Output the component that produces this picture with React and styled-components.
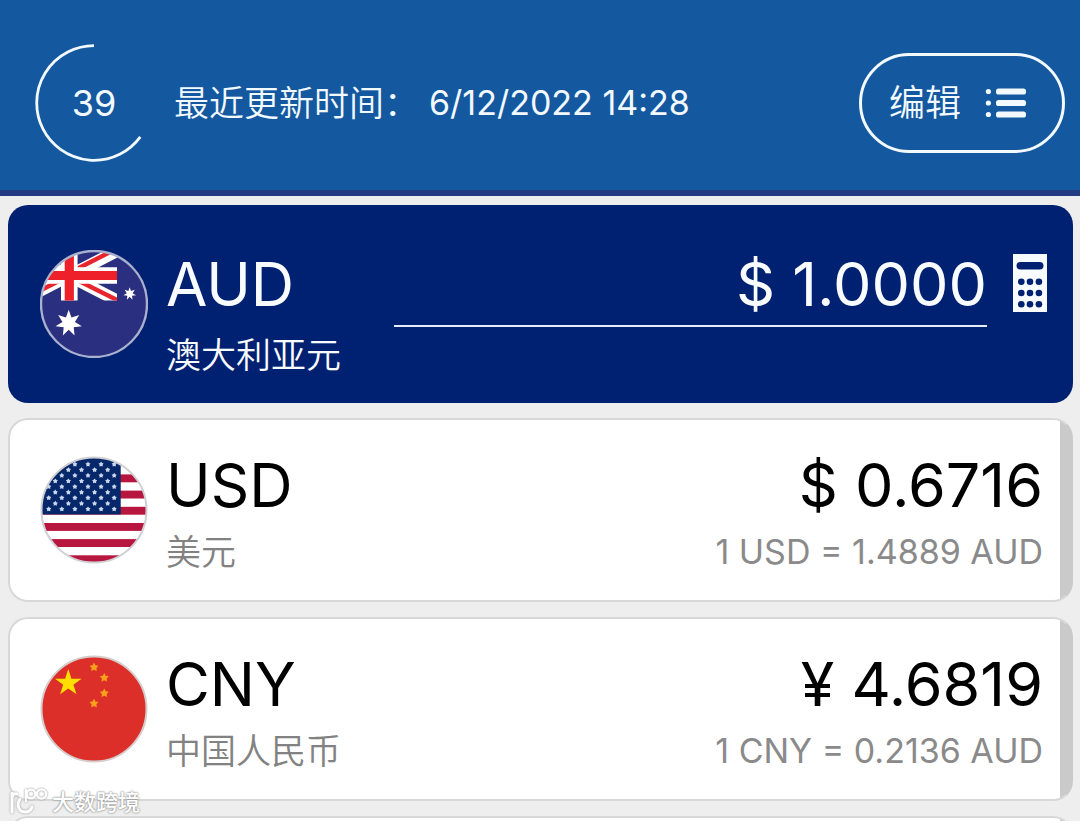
import React from "react";
import styled, { createGlobalStyle } from "styled-components";

const GlobalStyle = createGlobalStyle`
  * { box-sizing: border-box; }
  body {
    margin: 0;
    background: #eeeeee;
    font-family: Inter, "Noto Sans CJK SC", sans-serif;
    color: #000;
  }
  button, input { font: inherit; color: inherit; }
`;

const Screen = styled.div`
  position: relative;
  display: flex;
  flex-direction: column;
  height: 100vh;
  overflow: hidden;
`;

const Header = styled.header`
  flex: none;
  display: flex;
  align-items: center;
  padding: 44px 15px 28px 35px;
  background: #14589f;
  border-bottom: 6px solid #233b82;
  color: #f2f9ff;
`;

const Countdown = styled.div`
  position: relative;
  display: grid;
  place-items: center;
  width: 118px;
  height: 118px;
  font-size: 36px;
  line-height: 44px;
`;

const Ring = styled.svg`
  position: absolute;
  inset: 0;
  width: 100%;
  height: 100%;
`;

const Updated = styled.p`
  display: flex;
  gap: 10px;
  flex: 1;
  margin: 0 0 0 21px;
  font-size: 34px;
  line-height: 48px;
  white-space: nowrap;
`;

const UpdatedLabel = styled.span`
  font-size: 35px;
  font-weight: 350;
`;

const EditButton = styled.button`
  display: flex;
  align-items: center;
  gap: 24px;
  height: 100px;
  padding: 0 35px 0 27px;
  border: 3px solid #f2f9ff;
  border-radius: 50px;
  background: none;
  font-size: 36px;
  font-weight: 350;
  line-height: 48px;
  white-space: nowrap;
`;

const List = styled.main`
  flex: 1;
  min-height: 0;
  display: flex;
  flex-direction: column;
  gap: 15px;
  padding: 9px 7px 0 8px;
  overflow-y: auto;
  scrollbar-width: none;
`;

const Card = styled.section`
  flex: none;
  display: flex;
  gap: 18px;
  height: 184px;
  padding: 0 28px 0 30px;
  border: 2px solid #d8d8d8;
  border-right-color: #cacaca;
  border-radius: 20px;
  background: linear-gradient(to left, #cacaca 11px, #fff 11px);
`;

const BaseCard = styled(Card)`
  height: 198px;
  padding: 0 26px 0 32px;
  border: 0;
  background: #002171;
  color: #f8fbff;
`;

const Flag = styled.svg`
  flex: none;
  align-self: center;
  width: 108px;
  height: 108px;
`;

const Lines = styled.div`
  display: flex;
  flex-direction: column;
  gap: 7px;
  padding-top: 27px;
  white-space: nowrap;
`;

const BaseLines = styled(Lines)`
  flex: 0 0 228px;
  gap: 11px;
  padding-top: 41px;
`;

const Rates = styled(Lines)`
  margin-left: auto;
  text-align: right;
`;

const Code = styled.h2`
  margin: 0;
  font-size: 60px;
  font-weight: 400;
  line-height: 76px;
`;

const Amount = styled.div`
  font-size: 61px;
  line-height: 76px;
`;

const Name = styled.label`
  color: ${(p) => (p.$light ? "inherit" : "#828282")};
  font-size: 35px;
  font-weight: 350;
  line-height: 44px;
`;

const Conversion = styled.div`
  color: #8a8a8a;
  font-size: 34px;
  line-height: 44px;
`;

const AmountInput = styled.input`
  flex: 1;
  min-width: 0;
  height: 82px;
  margin: 40px 8px 0 -18px;
  padding: 0 0 2px;
  border: 0;
  border-bottom: 2px solid #e4ecf8;
  border-radius: 0;
  outline: 0;
  background: none;
  font-size: 61px;
  text-align: right;
`;

const CalculatorButton = styled.button`
  flex: none;
  display: block;
  width: 34px;
  height: 58px;
  margin-top: 49px;
  padding: 0;
  border: 0;
  background: none;
`;

const Watermark = styled.div`
  position: absolute;
  left: 8px;
  bottom: 5px;
  display: flex;
  align-items: flex-end;
  gap: 4px;
  color: #fff;
  font-size: 22px;
  font-weight: 500;
  line-height: 28px;
  text-shadow: 0 0 2px #8a8a8a, 0 0 2px #9a9a9a;
`;

const MarkLogo = styled.svg`
  width: 40px;
  height: 30px;
  filter: drop-shadow(0 0 1px #909090);
`;

function star(cx, cy, outer, inner, points) {
  return Array.from({ length: points * 2 }, (_, i) => {
    const r = i % 2 ? inner : outer;
    const a = (Math.PI * i) / points - Math.PI / 2;
    return `${(cx + r * Math.cos(a)).toFixed(2)},${(cy + r * Math.sin(a)).toFixed(2)}`;
  }).join(" ");
}

function AustraliaFlag() {
  return (
    <Flag viewBox="0 0 108 108" aria-hidden="true">
      <clipPath id="au-round"><circle cx="54" cy="54" r="53" /></clipPath>
      <clipPath id="au-jack"><path d="M0 0H72L77 6V50.5H0Z" /></clipPath>
      <g clipPath="url(#au-round)">
        <rect width="108" height="108" fill="#2b2f7f" />
        <g clipPath="url(#au-jack)">
          <path d="M-19 1 77 50.5M-19 50.5 77 1" stroke="#fff" strokeWidth="12" />
          <path d="M29 26 78 50.5M29 23 78-2M29 26-19 50" stroke="#e8242c" strokeWidth="4.4" />
          <path d="M0 25.5H77M29.3 0V51" stroke="#fff" strokeWidth="16.6" />
          <path d="M0 25.5H77M29.3 0V51" stroke="#ee2029" strokeWidth="9.2" />
        </g>
        <polygon points={star(28.7, 73.3, 13.5, 6.4, 7)} fill="#fff" />
        <polygon points={star(89.7, 43.8, 6.5, 3, 7)} fill="#fff" />
      </g>
      <circle cx="54" cy="54" r="53" fill="none" stroke="#aab1cf" strokeWidth="2.4" />
    </Flag>
  );
}

function UnitedStatesFlag() {
  const stars = [];
  for (let row = 0; row < 9; row++) {
    for (let col = 0; col < (row % 2 ? 5 : 6); col++) {
      stars.push([8.7 + (row % 2 ? 6.6 : 0) + col * 13.1, 8.3 + row * 5.6]);
    }
  }
  return (
    <Flag viewBox="0 0 108 108" aria-hidden="true">
      <clipPath id="us-round"><circle cx="54" cy="54" r="52.5" /></clipPath>
      <g clipPath="url(#us-round)">
        <rect width="108" height="108" fill="#fff" />
        {[2.2, 18.4, 34.6, 50.8, 67, 83.1, 99.3].map((y) => (
          <rect key={y} y={y} width="108" height="7.9" fill="#b7173f" />
        ))}
        <rect width="80.7" height="58.4" fill="#06286b" />
        {stars.map(([x, y]) => (
          <polygon key={`${x}-${y}`} points={star(x, y, 2.7, 1.6, 5)} fill="#c9d8ee" />
        ))}
      </g>
      <circle cx="54" cy="54" r="52.5" fill="none" stroke="#cfcfd4" strokeWidth="2" />
    </Flag>
  );
}

function ChinaFlag() {
  return (
    <Flag viewBox="0 0 108 108" aria-hidden="true">
      <circle cx="54" cy="54" r="52.5" fill="#dc2f29" stroke="#d5cccc" strokeWidth="2" />
      <polygon points={star(28.3, 28, 14, 5.4, 5)} fill="#ffde00" />
      {[[54, 12.2], [64.3, 22.8], [64.3, 38.2], [54, 48.5]].map(([x, y]) => (
        <polygon key={`${x}-${y}`} points={star(x, y, 4.8, 2.5, 5)} fill="#f9a01b" />
      ))}
    </Flag>
  );
}

const rates = [
  { code: "USD", name: "美元", amount: "$ 0.6716", conversion: "1 USD = 1.4889 AUD", FlagIcon: UnitedStatesFlag },
  { code: "CNY", name: "中国人民币", amount: "¥ 4.6819", conversion: "1 CNY = 0.2136 AUD", FlagIcon: ChinaFlag },
];

export default function App() {
  return (
    <Screen>
      <GlobalStyle />
      <Header>
        <Countdown>
          <Ring viewBox="0 0 118 118" aria-hidden="true">
            <path d="M59 1.7A57.3 57.3 0 1 0 105.3 92.8" fill="none" stroke="currentColor" strokeWidth="2.8" />
          </Ring>
          39
        </Countdown>
        <Updated>
          <UpdatedLabel>最近更新时间：</UpdatedLabel>
          <time>6/12/2022 14:28</time>
        </Updated>
        <EditButton type="button">
          编辑
          <svg width="42" height="32" viewBox="0 0 42 32" fill="currentColor" aria-hidden="true">
            {[4.5, 16, 27.5].map((y) => (
              <g key={y}>
                <circle cx="3.4" cy={y} r="2.6" />
                <rect x="11" y={y - 3} width="30" height="6" rx="2.6" />
              </g>
            ))}
          </svg>
        </EditButton>
      </Header>

      <List>
        <BaseCard>
          <AustraliaFlag />
          <BaseLines>
            <Code>AUD</Code>
            <Name htmlFor="base-amount" $light>澳大利亚元</Name>
          </BaseLines>
          <AmountInput id="base-amount" type="text" inputMode="decimal" defaultValue="$ 1.0000" />
          <CalculatorButton type="button" aria-label="计算器">
            <svg width="34" height="58" viewBox="0 0 34 58" aria-hidden="true">
              <rect width="34" height="58" fill="#f8fbff" />
              <rect x="3.5" y="8" width="27" height="7.6" rx="3.8" fill="#002171" />
              {[27.8, 39, 50.2].map((y) =>
                [8.3, 17, 25.9].map((x) => <circle key={`${x}-${y}`} cx={x} cy={y} r="3.3" fill="#002171" />)
              )}
            </svg>
          </CalculatorButton>
        </BaseCard>

        {rates.map(({ code, name, amount, conversion, FlagIcon }) => (
          <Card key={code}>
            <FlagIcon />
            <Lines>
              <Code>{code}</Code>
              <Name as="div">{name}</Name>
            </Lines>
            <Rates>
              <Amount>{amount}</Amount>
              <Conversion>{conversion}</Conversion>
            </Rates>
          </Card>
        ))}
        <Card />
      </List>

      <Watermark>
        <MarkLogo viewBox="0 0 40 30" fill="none" stroke="#fff" strokeWidth="3" strokeLinecap="round" aria-hidden="true">
          <path d="M4 7V26M4 13C4 9 6 7 9 8M12 13C8 19 11 26 17 26C21 26 23 24 24 21" />
          <path d="M18 4V15" strokeWidth="2.4" />
          <circle cx="23" cy="8" r="4.4" strokeWidth="2.4" />
          <circle cx="33.5" cy="8" r="4.6" strokeWidth="2.4" />
        </MarkLogo>
        <span>大数跨境</span>
      </Watermark>
    </Screen>
  );
}
